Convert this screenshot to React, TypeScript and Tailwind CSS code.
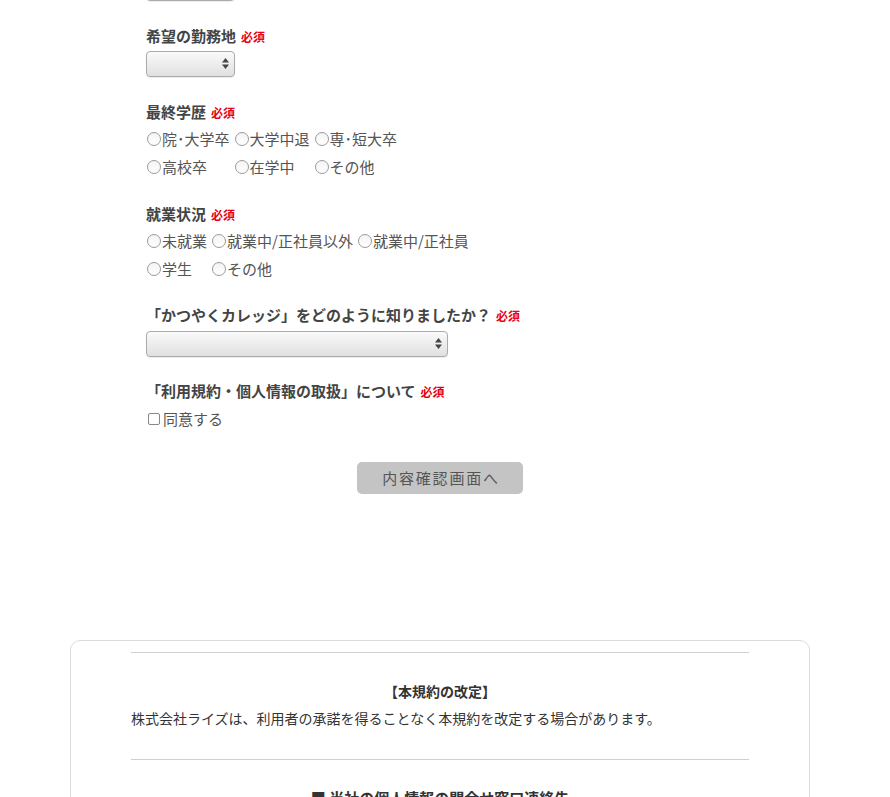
import React from 'react';

const jp = { fontFamily: '"Noto Sans CJK JP", "Noto Sans", sans-serif' };

function Required() {
  return <span className="ml-[5px] text-[12px] font-bold text-[#e60012]">必須</span>;
}

function Label({ children }: { children: React.ReactNode }) {
  return (
    <div className="h-[24px] leading-[24px] text-[15px] font-bold text-[#444]">
      {children}
      <Required />
    </div>
  );
}

function Select({ width }: { width: number }) {
  return (
    <div className="relative h-[26px]" style={{ width }}>
      <select className="h-full w-full appearance-none rounded-[4px] border border-[#ababab] bg-gradient-to-b from-[#fafafa] to-[#e0e0e0] shadow-[0_1px_1px_rgba(0,0,0,0.08)] outline-none" />
      <svg className="pointer-events-none absolute right-[6px] top-[7px]" width="7" height="11" viewBox="0 0 7 11">
        <path d="M3.5 0 L7 4.5 L0 4.5 Z" fill="#444" />
        <path d="M0 6.5 L7 6.5 L3.5 11 Z" fill="#444" />
      </svg>
    </div>
  );
}

function Radio({ label }: { label: string }) {
  return (
    <label className="flex h-[28px] items-center text-[15px] text-[#555]">
      <span className="mr-[1px] inline-block h-[14px] w-[14px] rounded-full border border-[#9a9a9a] bg-gradient-to-b from-[#f4f4f4] to-white" />
      {label}
    </label>
  );
}

function RadioGrid({ rows }: { rows: string[][] }) {
  return (
    <div className="grid grid-cols-[auto_auto_auto] justify-start gap-x-[5px] pl-[1px]">
      {rows.flatMap((row, r) =>
        [0, 1, 2].map((c) => (row[c] ? <Radio key={r + '-' + c} label={row[c]} /> : <span key={r + '-' + c} />))
      )}
    </div>
  );
}

export default function App() {
  return (
    <div className="min-h-[797px] w-[890px] overflow-hidden bg-white" style={jp}>
      <div className="ml-[70px] w-[740px]">
        <div className="pl-[76px]">
          <div className="-mt-[25px]">
            <Select width={89} />
          </div>

          <div className="mt-[23px]">
            <Label>希望の勤務地</Label>
            <div className="mt-[3px]">
              <Select width={89} />
            </div>
          </div>

          <div className="mt-[23px]">
            <Label>最終学歴</Label>
            <div className="mt-[1px]">
              <RadioGrid
                rows={[
                  ['院･大学卒', '大学中退', '専･短大卒'],
                  ['高校卒', '在学中', 'その他'],
                ]}
              />
            </div>
          </div>

          <div className="mt-[21px]">
            <Label>就業状況</Label>
            <div className="mt-[1px]">
              <RadioGrid
                rows={[
                  ['未就業', '就業中/正社員以外', '就業中/正社員'],
                  ['学生', 'その他'],
                ]}
              />
            </div>
          </div>

          <div className="mt-[20px]">
            <Label>「かつやくカレッジ」をどのように知りましたか？</Label>
            <div className="mt-[4px]">
              <Select width={302} />
            </div>
          </div>

          <div className="mt-[22px]">
            <Label>「利用規約・個人情報の取扱」について</Label>
            <label className="mt-[2px] flex h-[28px] items-center text-[15px] text-[#555]">
              <span className="ml-[2px] mr-[3px] inline-block h-[12px] w-[12px] rounded-[2px] border border-[#888] bg-white" />
              同意する
            </label>
          </div>
        </div>

        <div className="mt-[29px] flex justify-center">
          <button className="h-[32px] w-[166px] rounded-[5px] bg-[#c4c4c4] pl-[2px] text-[15px] tracking-[0.12em] text-[#555]">
            内容確認画面へ
          </button>
        </div>

        <div className="mt-[146px] rounded-[10px] border border-[#dcdcdc] px-[60px] pt-[11px] pb-[20px] text-[#333]">
          <hr className="border-t border-[#cfcfcf]" />
          <h3 className="mt-[26px] text-center text-[14px] font-bold leading-[24px]">【本規約の改定】</h3>
          <p className="mt-[3px] text-[14px] leading-[24px]">
            株式会社ライズは、利用者の承諾を得ることなく本規約を改定する場合があります。
          </p>
          <hr className="mt-[29px] border-t border-[#cfcfcf]" />
          <h3 className="mt-[26px] text-center text-[15px] font-bold leading-[24px]">■ 当社の個人情報の問合せ窓口連絡先</h3>
        </div>
      </div>
    </div>
  );
}
